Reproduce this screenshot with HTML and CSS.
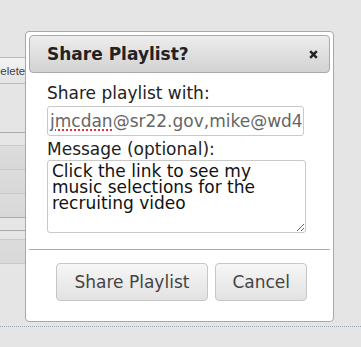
FILE: index.html
```html
<!DOCTYPE html>
<html lang="en">
<head>
    <meta charset="UTF-8">
    <title>Share Playlist</title>
    <link rel="stylesheet" href="styles.css">
</head>
<body>
    <div class="page">
        <button class="delete-button">Delete</button>
        <div class="rows">
            <div class="row row-thin"></div>
            <div class="row row-item"></div>
            <div class="row row-item"></div>
            <div class="row row-item"></div>
            <div class="row row-thin"></div>
            <div class="row row-small"></div>
            <div class="row row-item"></div>
            <div class="row row-last"></div>
        </div>
        <div class="footer-line"></div>
    </div>

    <div class="dialog">
        <div class="dialog-titlebar">
            <span class="dialog-title">Share Playlist?</span>
            <span class="dialog-close">
                <svg width="9" height="9" viewBox="0 0 9 9"><path d="M1.2 1.2 L7.8 7.8 M7.8 1.2 L1.2 7.8" stroke="#222" stroke-width="2.4" fill="none"/></svg>
            </span>
        </div>
        <div class="dialog-content">
            <label class="field-label">Share playlist with:</label>
            <div class="field"><span class="misspelled">jmcdan</span>@sr22.gov,mike@wd44.gov</div>
            <label class="field-label label-message">Message (optional):</label>
            <textarea class="message">Click the link to see my music selections for the recruiting video</textarea>
        </div>
        <div class="dialog-buttons">
            <button class="dialog-button button-share">Share Playlist</button>
            <button class="dialog-button">Cancel</button>
        </div>
    </div>
</body>
</html>
```

FILE: styles.css
```css
body {
    margin: 0;
    background-color: #e5e5e5;
    font-family: 'DejaVu Sans', Verdana, sans-serif;
    overflow: hidden;
}
.page {
    padding-top: 57px;
}
.delete-button {
    display: block;
    margin-left: -15px;
    height: 27px;
    width: 42px;
    padding: 0 0 0 6px;
    text-align: left;
    font-family: 'Liberation Sans', Arial, sans-serif;
    font-size: 11.5px;
    color: #444;
    background: linear-gradient(#f3f3f3, #e4e4e4);
    border: 1px solid #b9b9b9;
    border-radius: 3px;
}
.rows {
    margin-top: 48px;
    width: 320px;
}
.row {
    border-top: 1px solid #c9c9c9;
    background-color: #e6e6e6;
}
.row-thin {
    height: 12px;
    border-top-color: #a9a9a9;
}
.row-item {
    height: 23px;
    background: linear-gradient(#dcdcdc, #d8d8d8);
}
.row-small {
    height: 8px;
    border-top-color: #a9a9a9;
}
.row-thin + .row-item {
    border-top-color: #c9c9c9;
}
.row-last {
    height: 10px;
}
.footer-line {
    margin-top: 52px;
    border-top: 1px dotted #9aa6b6;
}

.dialog {
    position: absolute;
    left: 25px;
    top: 31px;
    width: 301px;
    padding: 3px;
    background-color: #fff;
    border: 1px solid #a8a8a8;
    border-radius: 4px;
}
.dialog-titlebar {
    display: flex;
    justify-content: space-between;
    align-items: center;
    height: 36px;
    padding: 0 11px 0 17px;
    background: linear-gradient(#ededed, #d2d2d2);
    border: 1px solid #aaa;
    border-radius: 4px;
}
.dialog-title {
    font-size: 17px;
    line-height: 20px;
    font-weight: bold;
    color: #222;
}
.dialog-close {
    display: flex;
    width: 9px;
    height: 9px;
}
.dialog-content {
    padding: 10px 0 0 18px;
}
.field-label {
    display: block;
    font-size: 17px;
    line-height: 20px;
    color: #222;
}
.field {
    margin-top: 3px;
    width: 251px;
    height: 28px;
    padding: 0 2px;
    line-height: 28px;
    font-size: 17px;
    color: #666;
    white-space: nowrap;
    overflow: hidden;
    border: 1px solid #c9c9c9;
    border-radius: 3px;
}
.misspelled {
    text-decoration: underline dotted #e0362b;
    text-decoration-thickness: 2px;
    text-underline-offset: 2px;
}
.label-message {
    margin-top: 3px;
}
.message {
    display: block;
    box-sizing: border-box;
    margin: 1px 0 0 0;
    width: 259px;
    height: 73px;
    padding: 2px 4px;
    font-family: 'DejaVu Sans', Verdana, sans-serif;
    font-size: 17px;
    line-height: 16px;
    color: #111;
    border: 1px solid #c9c9c9;
    border-radius: 3px;
    resize: both;
    overflow: hidden;
}
.dialog-buttons {
    display: flex;
    justify-content: flex-end;
    gap: 7px;
    margin-top: 16px;
    padding: 13px 23px 17px 0;
    border-top: 1px solid #ababab;
}
.dialog-button {
    height: 38px;
    padding: 0 16px;
    font-family: 'DejaVu Sans', Verdana, sans-serif;
    font-size: 17px;
    color: #444;
    background: linear-gradient(#f6f6f6, #e2e2e2);
    border: 1px solid #c6c6c6;
    border-radius: 4px;
}
.button-share {
    padding: 0 18px;
}
```
